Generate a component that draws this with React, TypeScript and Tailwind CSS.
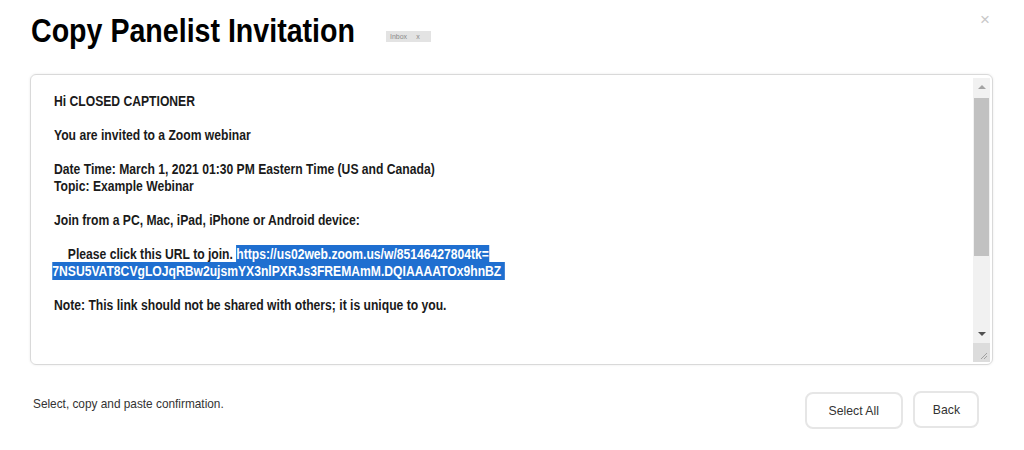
import React from 'react';

const font = { fontFamily: '"Liberation Sans", Arial, sans-serif' };

function Scrollbar() {
  return (
    <div className="flex flex-col w-[17px] bg-[#f1f1f1] mr-[2px] mt-[3px] mb-[2px]">
      <div className="h-[18px] flex items-center justify-center">
        <div className="w-0 h-0 border-l-[4px] border-r-[4px] border-b-[4px] border-l-transparent border-r-transparent border-b-[#a3a3a3]" />
      </div>
      <div className="h-[158px] mt-[2px] mx-[1px] bg-[#c1c1c1]" />
      <div className="flex-1" />
      <div className="h-[18px] flex items-center justify-center">
        <div className="w-0 h-0 border-l-[4px] border-r-[4px] border-t-[4px] border-l-transparent border-r-transparent border-t-[#505050]" />
      </div>
      <div className="h-[19px] bg-[#dcdcdc] flex items-end justify-end p-[2px]">
        <svg width="9" height="9" viewBox="0 0 9 9">
          <path d="M8 2 L2 8 M8 5 L5 8" stroke="#a0a0a0" strokeWidth="1" />
        </svg>
      </div>
    </div>
  );
}

export default function App() {
  return (
    <div className="w-[1024px] h-[450px] bg-white text-[#1a1a1a] overflow-hidden" style={font}>
      <div className="flex items-start h-[74px]">
        <div className="ml-[31px] mt-[14px] h-[33px] w-[330px]">
          <h1 className="text-[33px] leading-none font-bold text-black whitespace-nowrap origin-top-left scale-x-[0.866]">
            Copy Panelist Invitation
          </h1>
        </div>
        <div className="mt-[31px] ml-[25px] h-[11px] w-[45px] bg-[#e3e3e3] flex items-center gap-[9px] pl-[4px] text-[7px] text-[#8a8a8a] leading-none">
          <span>Inbox</span>
          <span>x</span>
        </div>
        <div className="ml-auto mr-[34px] mt-[11px] text-[17px] leading-none text-[#c8c8c8]">×</div>
      </div>

      <div className="ml-[30px] w-[963px] h-[291px] border border-[#d9d9d9] rounded-[6px] shadow-[0_0_3px_rgba(0,0,0,0.08)] flex">
        <div className="flex-1 pl-[23px] pt-[18px] overflow-hidden">
          <div className="w-[600px] origin-top-left scale-x-[0.867] text-[14px] leading-[17px] font-bold">
            <p>Hi CLOSED CAPTIONER</p>
            <p className="mt-[17px]">You are invited to a Zoom webinar</p>
            <p className="mt-[17px]">Date Time: March 1, 2021 01:30 PM Eastern Time (US and Canada)</p>
            <p>Topic: Example Webinar</p>
            <p className="mt-[17px]">Join from a PC, Mac, iPad, iPhone or Android device:</p>
            <p className="mt-[17px] whitespace-nowrap">
              <span className="pl-[16px]">Please click this URL to join. </span>
              <span className="bg-[#1f6fd0] text-white py-px">https://us02web.zoom.us/w/85146427804tk=</span>
              <br />
              <span className="bg-[#1f6fd0] text-white py-px -ml-[2px]">7NSU5VAT8CVgLOJqRBw2ujsmYX3nlPXRJs3FREMAmM.DQIAAAATOx9hnBZ&nbsp;</span>
            </p>
            <p className="mt-[17px]">Note: This link should not be shared with others; it is unique to you.</p>
          </div>
        </div>
        <Scrollbar />
      </div>

      <div className="flex items-start mt-[27px] pr-[45px]">
        <p className="ml-[33px] mt-[4px] text-[13px] leading-[16px] text-[#333] origin-top-left scale-x-[0.91] whitespace-nowrap">
          Select, copy and paste confirmation.
        </p>
        <div className="ml-auto flex gap-[10px]">
          <button className="w-[98px] h-[37px] rounded-[8px] border-2 border-[#e6e6e6] bg-white text-[13px] text-[#333]">
            <span className="inline-block scale-x-[0.94]">Select All</span>
          </button>
          <button className="w-[66px] h-[37px] rounded-[8px] border-2 border-[#e6e6e6] bg-white text-[13px] text-[#333] -mt-[1px]">
            <span className="inline-block scale-x-[0.94]">Back</span>
          </button>
        </div>
      </div>
    </div>
  );
}
